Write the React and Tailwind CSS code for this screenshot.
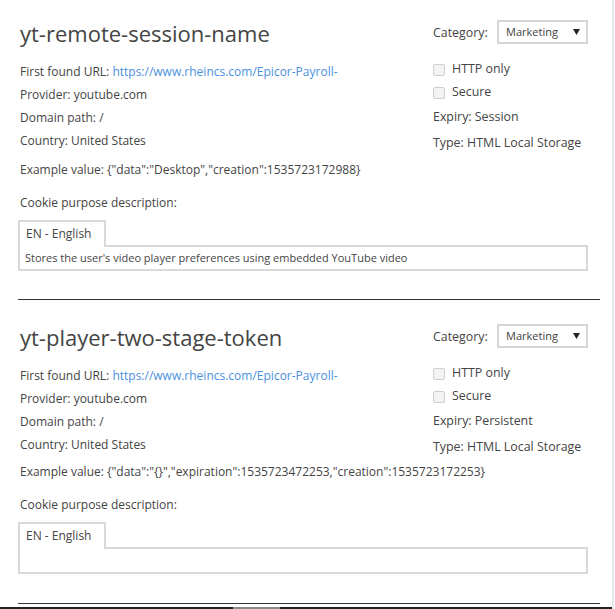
import React from 'react';

const cookies = [
  {
    name: 'yt-remote-session-name',
    url: 'https://www.rheincs.com/Epicor-Payroll-',
    provider: 'youtube.com',
    path: '/',
    country: 'United States',
    example: '{"data":"Desktop","creation":1535723172988}',
    expiry: 'Session',
    type: 'HTML Local Storage',
    description: "Stores the user's video player preferences using embedded YouTube video",
  },
  {
    name: 'yt-player-two-stage-token',
    url: 'https://www.rheincs.com/Epicor-Payroll-',
    provider: 'youtube.com',
    path: '/',
    country: 'United States',
    example: '{"data":"{}","expiration":1535723472253,"creation":1535723172253}',
    expiry: 'Persistent',
    type: 'HTML Local Storage',
    description: '',
  },
];

const Checkbox = ({ label }) => (
  <label className="flex items-center h-[23px]">
    <span className="w-[12px] h-[12px] rounded-[2px] border border-[#cfcfcf] bg-[#f3f3f3] mr-[7px]" />
    <span>{label}</span>
  </label>
);

// One cookie block, separator at the bottom
const CookieSection = ({ cookie, first }) => (
  <section className={`pl-[20px] ${first ? 'pt-[18px]' : 'pt-[22px]'}`}>
    <div className="flex justify-between h-[134px]">
      <div>
        <h2 className="text-[22px] leading-[30px] text-[#444]">{cookie.name}</h2>
        <div className="mt-[12px]">
          <p className="h-[23px] leading-[23px]">
            First found URL: <a className="text-[#4a8fe0]">{cookie.url}</a>
          </p>
          <p className="h-[23px] leading-[23px]">Provider: {cookie.provider}</p>
          <p className="h-[23px] leading-[23px]">Domain path: {cookie.path}</p>
          <p className="h-[23px] leading-[23px]">Country: {cookie.country}</p>
        </div>
      </div>
      <div className="w-[179px] pt-[2px] text-[12.4px]">
        <div className="flex items-center h-[24px]">
          <span className="w-[64px] pt-[2px]">Category:</span>
          <div className="w-[91px] h-[24px] border-2 border-[#d6d6d6] flex items-center justify-between pl-[7px] pr-[6px] text-[11px]">
            <span>Marketing</span>
            <svg width="7" height="6" viewBox="0 0 7 6">
              <path d="M0 0h7L3.5 6z" fill="#222" />
            </svg>
          </div>
        </div>
        <div className="mt-[14px]">
          <Checkbox label="HTTP only" />
          <Checkbox label="Secure" />
          <p className="h-[23px] leading-[23px] mt-[1px]">Expiry: {cookie.expiry}</p>
          <p className="h-[24px] leading-[24px] mt-[3px]">Type: {cookie.type}</p>
        </div>
      </div>
    </div>

    <p className={`${first ? 'mt-[8px]' : 'mt-[6px]'} h-[20px] leading-[20px]`}>Example value: {cookie.example}</p>
    <p className="mt-[13px] h-[20px] leading-[20px]">Cookie purpose description:</p>

    <div className="mt-[7px] -ml-[2px] w-[570px]">
      <div className="relative z-10 w-[88px] h-[27px] border-2 border-b-0 border-[#d9d9d9] bg-white pl-[6px] text-[12px] leading-[23px]">
        EN - English
      </div>
      <div
        className={`-mt-[2px] ${first ? 'h-[26px]' : 'h-[27px]'} border-2 border-[#d9d9d9] px-[5px] text-[11px] leading-[22px]`}
      >
        {cookie.description}
      </div>
    </div>

    <div className={`${first ? 'mt-[28px]' : 'mt-[29px]'} -ml-[2px] w-[582px] h-px bg-[#333]`} />
  </section>
);

export default function App() {
  return (
    <div
      className="w-[614px] h-[609px] overflow-hidden bg-white border-r-2 border-[#e8e8e8] text-[12px] text-[#444] flex flex-col"
      style={{ fontFamily: '"Open Sans", "Noto Sans", sans-serif' }}
    >
      {cookies.map((c, i) => (
        <CookieSection key={c.name} cookie={c} first={i === 0} />
      ))}
      <div className="mt-[3px] h-[2px] w-[612px] bg-[#222] flex shrink-0">
        <div className="ml-[233px] w-[47px] bg-[#8a8a8a]" />
      </div>
    </div>
  );
}
